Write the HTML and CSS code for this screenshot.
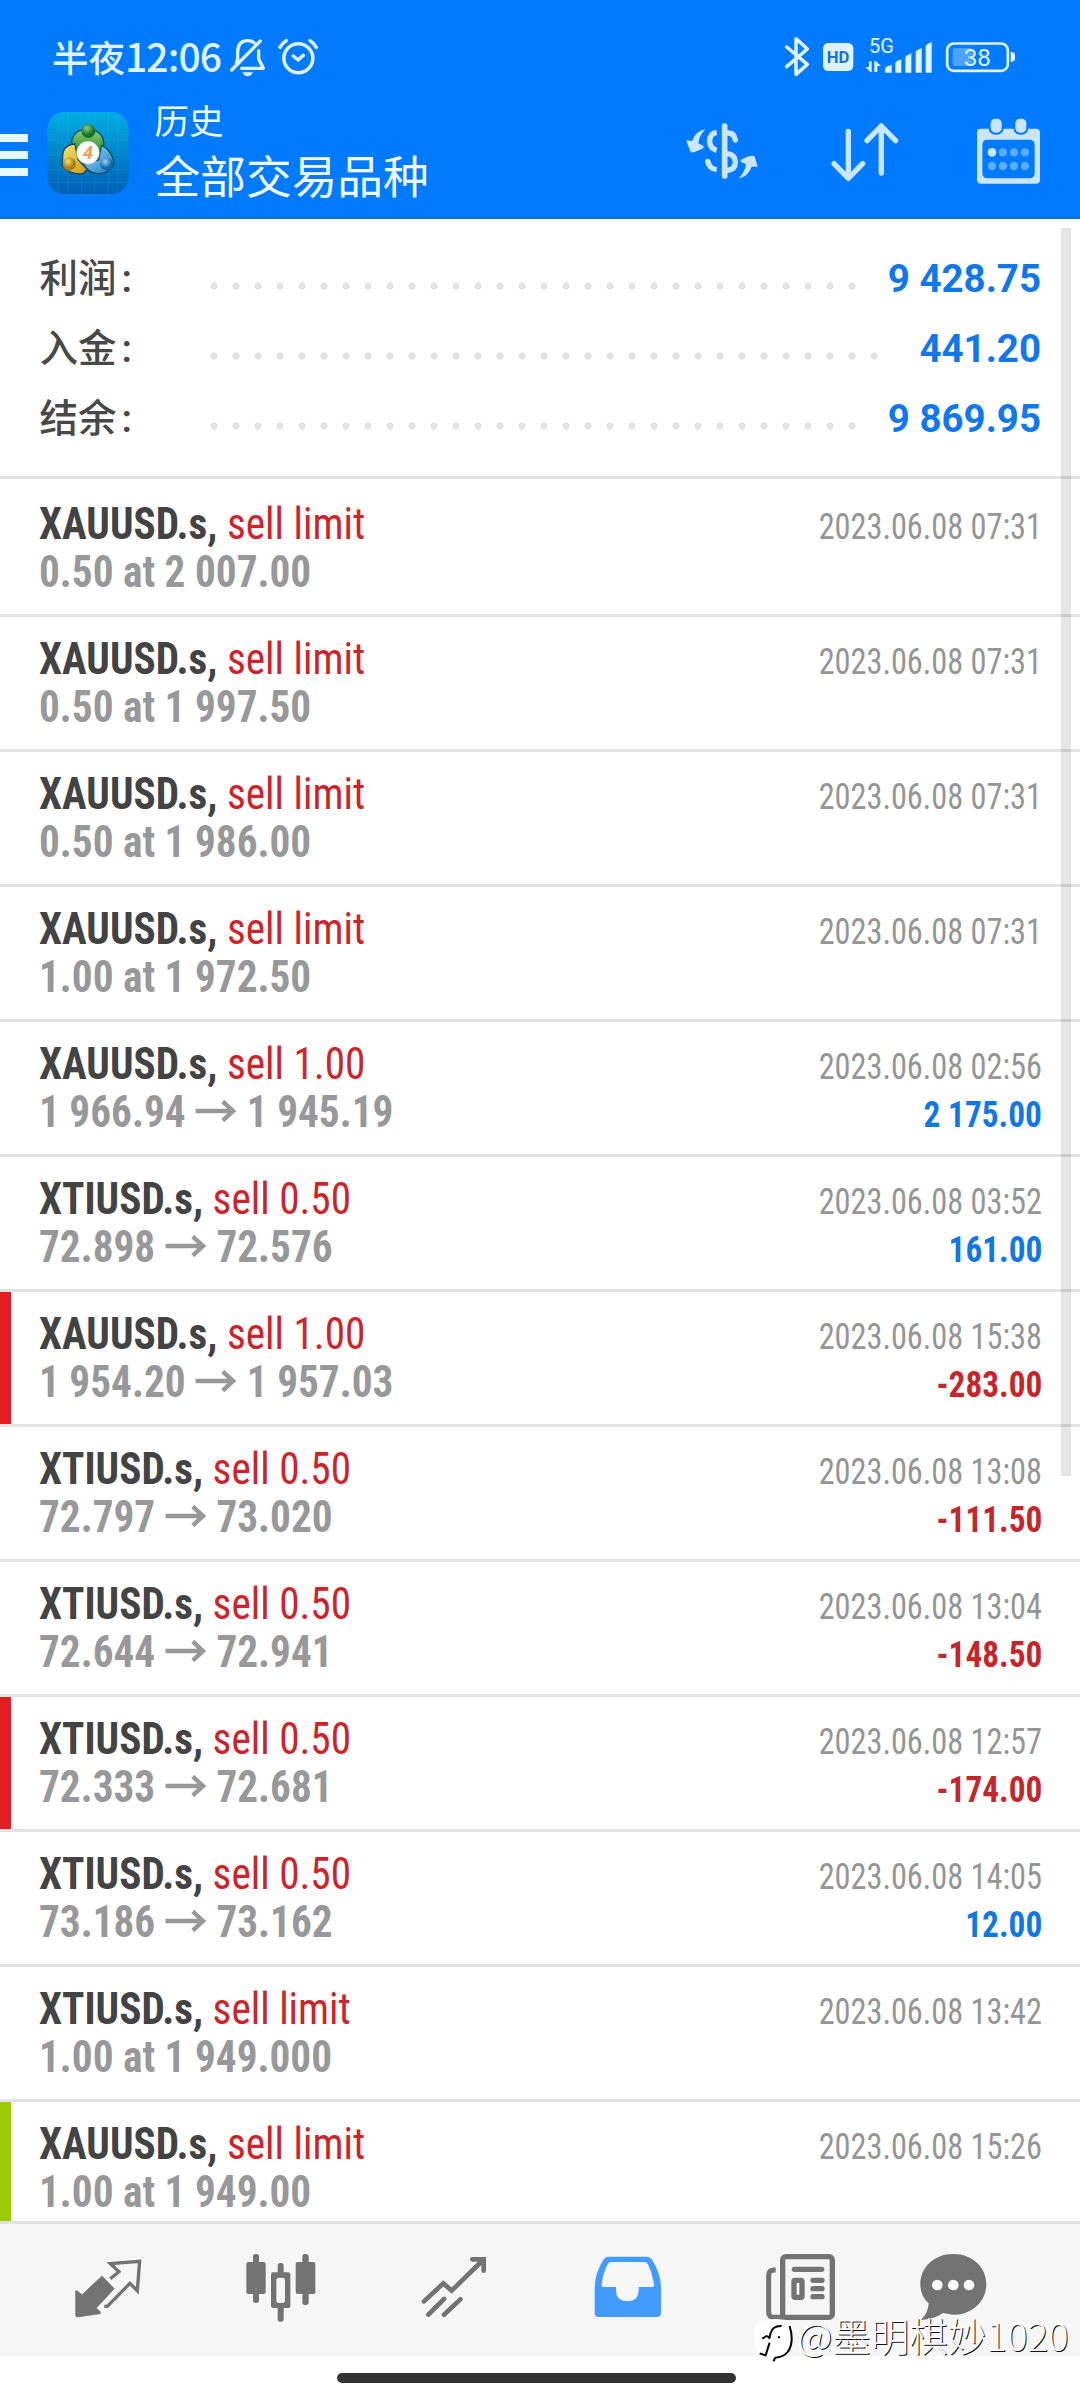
FILE: index.html
```html
<!DOCTYPE html>
<html lang="zh-CN">
<head>
<meta charset="utf-8">
<title>历史</title>
<link rel="stylesheet" href="styles.css">
</head>
<body>
<div class="screen">
  <header class="top">
    <div class="status">
      <span class="clock">半夜<b>12:06</b></span>
      <svg class="s-bell" viewBox="566 36 112 126" fill="none" stroke="#dff3ff" stroke-width="10" stroke-linecap="round" stroke-linejoin="round">
        <path d="M574 138L660 51M588 118L592 104V82Q594 50 622 50Q634 50 641 56M655 80V104L669 133H604"/>
        <path d="M606 145H638Q632 157 622 157T606 145Z" fill="#dff3ff" stroke="none"/>
      </svg>
      <svg class="s-alarm" viewBox="712 36 126 126" fill="none" stroke="#dff3ff" stroke-width="10.5" stroke-linecap="round" stroke-linejoin="round">
        <circle cx="776" cy="103" r="43.5"/>
        <path d="M721 70Q728 57 740 50M811 50Q823 57 830 70M761 96L775 108L791 94"/>
      </svg>
      <div class="status-right">
        <svg class="s-bt" viewBox="372 108 80 122" fill="none" stroke="#dff3ff" stroke-width="10.5" stroke-linejoin="round" stroke-linecap="round">
          <path d="M380 141L442 193L408 223V116L442 147L380 200"/>
        </svg>
        <svg class="s-hd" viewBox="486 108 96 122">
          <rect x="489" y="129" width="91" height="84" rx="16" fill="#dff1ff"/>
          <text x="534" y="189" text-anchor="middle" font-size="50" font-weight="700" fill="#1672cc">HD</text>
        </svg>
        <svg class="s-sig" viewBox="612 108 210 122" fill="#dff3ff">
          <text x="664" y="158" text-anchor="middle" font-size="60">5G</text>
          <path d="M627 184h8v32h-4l-15-15h11zM643 216v-32h5l15 14h-11v18z"/>
          <path d="M675 218v-10q0-6 8-9l12-5v24zM706 218v-28q0-5 6-7l12-5v40zM736 218v-45q0-5 6-7l12-6v58zM767 218v-61q0-5 6-7l12-6v74zM797 218v-79q0-5 6-7l12-6v92z"/>
        </svg>
        <svg class="s-bat" viewBox="855 108 213 122">
          <rect x="878" y="144" width="60" height="54" rx="7" fill="#4ca3ff"/>
          <rect x="861.500" y="130.500" width="182" height="82" rx="20" fill="none" stroke="#dff3ff" stroke-width="8"/>
          <path d="M1052 155q13 2 13 9v13q0 7-13 9z" fill="#dff3ff"/>
          <text x="952" y="198" text-anchor="middle" font-size="73" fill="#dff3ff">38</text>
        </svg>
      </div>
    </div>
    <div class="appbar">
      <div class="menu"><i></i><i></i><i></i></div>
      <svg class="logo" viewBox="132 60 262 258">
        <defs>
          <linearGradient id="bg" x1="0" y1="0" x2="0" y2="1"><stop offset="0" stop-color="#00aee6"/><stop offset=".55" stop-color="#0080c8"/><stop offset="1" stop-color="#005fb4"/></linearGradient>
          <linearGradient id="gr" x1="0" y1="0" x2="0" y2="1"><stop offset="0" stop-color="#93d07a"/><stop offset="1" stop-color="#1f8a2c"/></linearGradient>
          <linearGradient id="ye" x1="0" y1="0" x2="1" y2="1"><stop offset="0" stop-color="#f4e66a"/><stop offset="1" stop-color="#c99a12"/></linearGradient>
          <linearGradient id="bl" x1="0" y1="0" x2="1" y2="1"><stop offset="0" stop-color="#a4dcf8"/><stop offset="1" stop-color="#1878c4"/></linearGradient>
          <radialGradient id="gb" cx=".4" cy=".3"><stop offset="0" stop-color="#8ecb80"/><stop offset="1" stop-color="#17702a"/></radialGradient>
          <radialGradient id="yb" cx=".4" cy=".3"><stop offset="0" stop-color="#f5e070"/><stop offset="1" stop-color="#a97c10"/></radialGradient>
          <radialGradient id="bb" cx=".4" cy=".3"><stop offset="0" stop-color="#9bd6f7"/><stop offset="1" stop-color="#1168ae"/></radialGradient>
        </defs>
        <rect x="142" y="66" width="244" height="246" rx="52" fill="url(#bg)"/>
        <path d="M142 123H386M142 150H386M142 195H386M142 238H386M142 277H386M174 70V308M203 66V312M245 66V312M284 66V312M325 66V312M354 70V308" stroke="#4fc3ee" stroke-width="1.500" opacity=".35"/>
        <g stroke="#124f6c" stroke-width="4">
          <path d="M216 172Q210 130 247 119Q265 112 284 121Q317 134 310 178L297 190L231 178Z" fill="url(#gr)"/>
          <path d="M225 162Q189 164 188 198L187 226Q204 254 248 252L262 238L235 210Z" fill="url(#ye)"/>
          <path d="M305 166Q335 180 342 218Q332 251 296 251Q266 252 250 221L296 210Z" fill="url(#bl)"/>
        </g>
        <circle cx="265" cy="123" r="21" fill="url(#gb)"/>
        <circle cx="208" cy="222" r="20" fill="url(#yb)"/>
        <circle cx="320" cy="222" r="19" fill="url(#bb)"/>
        <circle cx="264" cy="188" r="34" fill="#fffdf8" stroke="#bcc7bb" stroke-width="2"/>
        <text x="264" y="207" text-anchor="middle" font-size="54" font-weight="700" font-style="italic" fill="#f49b56">4</text>
      </svg>
      <div class="titles"><div class="t1">历史</div><div class="t2">全部交易品种</div></div>
      <svg class="i-cur" viewBox="72 340 228 220" fill="none" stroke="#c9e5ff" stroke-width="16" stroke-linecap="round">
        <path d="M194 379V529" stroke-width="17"/>
        <path d="M170 398Q149 402 149 424T170 452M170 510Q148 508 143 484" stroke-linecap="butt"/>
        <path d="M143 486V485M203 400Q223 400 226 421M203 462Q226 466 226 488T203 512"/>
        <path d="M136 389Q108 393 96 424L78 422L92 458Q101 461 130 445L131 439L115 431Q117 408 136 389ZM236 536Q264 531 275 501L293 501L284 470Q275 463 243 480L242 486L258 494Q256 516 236 536Z" fill="#c9e5ff" stroke="none"/>
      </svg>
      <svg class="i-sort" viewBox="505 340 220 220" fill="none" stroke="#c9e5ff" stroke-width="16" stroke-linecap="round" stroke-linejoin="round">
        <path d="M566 395V536M523 492L566 536L609 492M665 520V379M622 423L665 379L708 423"/>
      </svg>
      <svg class="i-cal" viewBox="945 340 200 220">
        <path fill="#c9e5ff" fill-rule="evenodd" d="M963 387H1128Q1140 387 1140 399V540Q1140 552 1128 552H963Q951 552 951 540V399Q951 387 963 387ZM983 420Q967 420 967 436V520Q967 536 983 536H1108Q1124 536 1124 520V436Q1124 420 1108 420Z"/>
        <g fill="#c9e5ff" stroke="#007aff" stroke-width="6"><rect x="989" y="354" width="39" height="48" rx="17"/><rect x="1063" y="354" width="39" height="48" rx="17"/></g>
        <circle cx="996" cy="458" r="13" fill="#c9e5ff"/>
        <g fill="#5cadff"><circle cx="1029" cy="458" r="12.500"/><circle cx="1062" cy="458" r="12.500"/><circle cx="1095" cy="458" r="12.500"/><circle cx="996" cy="499" r="12.500"/><circle cx="1029" cy="499" r="12.500"/><circle cx="1062" cy="499" r="12.500"/><circle cx="1095" cy="499" r="12.500"/></g>
      </svg>
    </div>
  </header>

  <section class="summary">
    <div class="sum"><span class="label">利润<i>:</i></span><span class="dots"></span><span class="value">9 428.75</span></div>
    <div class="sum"><span class="label">入金<i>:</i></span><span class="dots"></span><span class="value">441.20</span></div>
    <div class="sum"><span class="label">结余<i>:</i></span><span class="dots"></span><span class="value">9 869.95</span></div>
  </section>

  <main class="list">
    <div class="row first"><div class="line"><span class="sym">XAUUSD.s, <em>sell limit</em></span><time>2023.06.08 07:31</time></div><div class="line"><span class="price">0.50 at 2 007.00</span></div></div>
    <div class="row"><div class="line"><span class="sym">XAUUSD.s, <em>sell limit</em></span><time>2023.06.08 07:31</time></div><div class="line"><span class="price">0.50 at 1 997.50</span></div></div>
    <div class="row"><div class="line"><span class="sym">XAUUSD.s, <em>sell limit</em></span><time>2023.06.08 07:31</time></div><div class="line"><span class="price">0.50 at 1 986.00</span></div></div>
    <div class="row"><div class="line"><span class="sym">XAUUSD.s, <em>sell limit</em></span><time>2023.06.08 07:31</time></div><div class="line"><span class="price">1.00 at 1 972.50</span></div></div>
    <div class="row"><div class="line"><span class="sym">XAUUSD.s, <em>sell 1.00</em></span><time>2023.06.08 02:56</time></div><div class="line"><span class="price">1 966.94 <svg class="arr" viewBox="0 0 43 22"><path d="M0 11H40M29 1.500L40 11L29 20.500"/></svg> 1 945.19</span><span class="pl">2 175.00</span></div></div>
    <div class="row"><div class="line"><span class="sym">XTIUSD.s, <em>sell 0.50</em></span><time>2023.06.08 03:52</time></div><div class="line"><span class="price">72.898 <svg class="arr" viewBox="0 0 43 22"><path d="M0 11H40M29 1.500L40 11L29 20.500"/></svg> 72.576</span><span class="pl">161.00</span></div></div>
    <div class="row stop"><div class="line"><span class="sym">XAUUSD.s, <em>sell 1.00</em></span><time>2023.06.08 15:38</time></div><div class="line"><span class="price">1 954.20 <svg class="arr" viewBox="0 0 43 22"><path d="M0 11H40M29 1.500L40 11L29 20.500"/></svg> 1 957.03</span><span class="pl loss">-283.00</span></div></div>
    <div class="row"><div class="line"><span class="sym">XTIUSD.s, <em>sell 0.50</em></span><time>2023.06.08 13:08</time></div><div class="line"><span class="price">72.797 <svg class="arr" viewBox="0 0 43 22"><path d="M0 11H40M29 1.500L40 11L29 20.500"/></svg> 73.020</span><span class="pl loss">-111.50</span></div></div>
    <div class="row"><div class="line"><span class="sym">XTIUSD.s, <em>sell 0.50</em></span><time>2023.06.08 13:04</time></div><div class="line"><span class="price">72.644 <svg class="arr" viewBox="0 0 43 22"><path d="M0 11H40M29 1.500L40 11L29 20.500"/></svg> 72.941</span><span class="pl loss">-148.50</span></div></div>
    <div class="row stop"><div class="line"><span class="sym">XTIUSD.s, <em>sell 0.50</em></span><time>2023.06.08 12:57</time></div><div class="line"><span class="price">72.333 <svg class="arr" viewBox="0 0 43 22"><path d="M0 11H40M29 1.500L40 11L29 20.500"/></svg> 72.681</span><span class="pl loss">-174.00</span></div></div>
    <div class="row"><div class="line"><span class="sym">XTIUSD.s, <em>sell 0.50</em></span><time>2023.06.08 14:05</time></div><div class="line"><span class="price">73.186 <svg class="arr" viewBox="0 0 43 22"><path d="M0 11H40M29 1.500L40 11L29 20.500"/></svg> 73.162</span><span class="pl">12.00</span></div></div>
    <div class="row"><div class="line"><span class="sym">XTIUSD.s, <em>sell limit</em></span><time>2023.06.08 13:42</time></div><div class="line"><span class="price">1.00 at 1 949.000</span></div></div>
    <div class="row take"><div class="line"><span class="sym">XAUUSD.s, <em>sell limit</em></span><time>2023.06.08 15:26</time></div><div class="line"><span class="price">1.00 at 1 949.00</span></div></div>
  </main>

  <nav class="tabs">
    <svg class="n1" viewBox="40 30 220 230">
      <path d="M127 108L164 146L110 204L122 215V221L53 231Q48 231 48 226V152L53 153L67 164Z" fill="#737373" stroke="#737373" stroke-width="2" stroke-linejoin="round"/>
      <path d="M152 116L178 95L152 71L240 64L233 152L211 130L143 199H134" fill="none" stroke="#737373" stroke-width="10"/>
    </svg>
    <svg class="n2" viewBox="550 30 230 230" fill="#737373">
      <rect x="580" y="42" width="18" height="147" rx="8"/><rect x="560" y="66" width="58" height="96" rx="6"/>
      <rect x="728" y="42" width="19" height="153" rx="8"/><rect x="708" y="66" width="59" height="96" rx="6"/>
      <rect x="654" y="69" width="18" height="176" rx="8"/><rect x="634" y="97" width="58" height="107" rx="6"/>
      <rect x="650" y="113" width="26" height="76" rx="8" fill="#f6f6f6"/>
    </svg>
    <svg class="n3" viewBox="1075 30 215 230" fill="none" stroke="#737373" stroke-width="14" stroke-linecap="round" stroke-linejoin="miter">
      <path d="M1093 184L1151 130L1176 152L1270 60M1238 58H1272V92M1106 224L1153 177M1153 224L1202 178"/>
    </svg>
    <svg class="n4" viewBox="35 30 215 230">
      <path fill="#429bff" fill-rule="evenodd" d="M83 50H200Q209 50 214 58Q242 100 242 143V219Q242 231 230 231H55Q43 231 43 219V143Q43 100 70 58Q75 50 83 50ZM94 66Q86 66 82 73Q70 95 64 131Q62 141 72 141H107V149Q107 183 141 183T175 149V141H213Q223 141 221 131Q215 98 203 73Q199 66 191 66Z"/>
    </svg>
    <svg class="n5" viewBox="550 30 225 230" fill="none" stroke="#737373">
      <rect x="609" y="50" width="149" height="182" rx="10" stroke-width="16"/>
      <path d="M588 90H584Q567 90 567 107V216Q567 232 583 232H612" stroke-width="15"/>
      <path d="M644 88H726M700 121H727M700 146H727M700 170H727" stroke-width="16" stroke-linecap="round"/>
      <rect x="643" y="121" width="24" height="51" rx="3" stroke-width="16"/>
    </svg>
    <svg class="n6" viewBox="1010 30 220 230">
      <path fill="#737373" d="M1119 42C1178 42 1218 83 1218 133C1218 186 1172 226 1119 224Q1105 223 1088 219Q1062 238 1022 240Q1044 218 1045 190Q1020 168 1020 133C1020 83 1060 42 1119 42Z"/>
      <g fill="#fff"><circle cx="1071" cy="135" r="16"/><circle cx="1119" cy="135" r="16"/><circle cx="1166" cy="135" r="16"/></g>
    </svg>
  </nav>
  <div class="gesture"><i></i></div>

  <div class="scrollbar"></div>
  <div class="watermark">
    <svg viewBox="515 235 130 140"><path d="M527 256Q540 240 560 246Q592 234 624 250Q640 270 638 300Q636 335 606 352Q570 362 540 348Q518 330 524 304Q518 275 527 256Z" fill="#fff"/>
      <path d="M604 262Q578 260 571 283L566 300M571 297L558 292L546 300M568 312L556 350L538 344M628 262Q643 312 622 340Q610 355 584 357M584 357L580 368M593 296h6" fill="none" stroke="#000" stroke-width="6"/></svg>
    <span>@墨明棋妙1020</span>
  </div>
</div>
</body>
</html>
```
FILE: styles.css
```css
* { box-sizing: border-box; }
body { margin: 0; background: #fff; font-family: Roboto, "Noto Sans CJK SC", sans-serif; }
i, em { font-style: normal; }
svg { display: block; flex: none; overflow: visible; }
.screen { position: relative; width: 1080px; height: 2400px; display: flex; flex-direction: column; overflow: hidden; }

.top { flex: none; height: 219px; background: #007aff; border-bottom: 2px solid #1b6dbb; }
.status { height: 90px; padding: 24px 64px 0 52px; display: flex; align-items: flex-start; }
.status svg { margin-top: 12px; }
.clock { width: 176.700px; font: 500 36.500px/63px "Noto Sans CJK SC", sans-serif; color: #dff3ff; white-space: nowrap; }
.clock b { font-weight: 500; font-size: 39px; letter-spacing: -0.900px; }
.s-bell { width: 37.300px; height: 42px; }
.s-alarm { width: 42px; height: 42px; margin-left: 11.300px; }
.status-right { margin-left: auto; display: flex; }
.s-bt { width: 26.700px; height: 40.700px; margin-right: 11.300px; }
.s-hd { width: 32px; height: 40.700px; margin-right: 10px; }
.s-sig { width: 70px; height: 40.700px; margin-right: 11px; }
.s-bat { width: 71px; height: 40.700px; }

.appbar { height: 127px; display: flex; align-items: flex-start; padding-right: 38.300px; }
.menu { width: 44px; padding-top: 44px; display: flex; flex-direction: column; gap: 9px; }
.menu i { width: 27.500px; height: 8px; background: #e4f8ff; }
.logo { width: 87.300px; height: 86px; margin-top: 20px; }
.titles { margin: 2px auto 0 23.300px; color: #f0fbff; font-family: "Noto Sans CJK SC", sans-serif; white-space: nowrap; }
.t1 { font-size: 34.500px; line-height: 55px; }
.t2 { font-size: 45.700px; line-height: 54px; }
.i-cur { width: 76px; height: 73.300px; margin-top: 23.300px; }
.i-sort { width: 73.300px; height: 73.300px; margin: 23.300px 0 0 68.300px; }
.i-cal { width: 66.700px; height: 73.300px; margin: 23.300px 0 0 73.300px; }

.summary { flex: none; height: 260px; padding: 25px 39px 0 39.500px; border-bottom: 3px solid #e3e3e3; }
.sum { height: 70px; display: flex; font-size: 38.500px; line-height: 70px; }
.label { width: 163px; color: #484848; font-family: "Noto Sans CJK SC", sans-serif; font-weight: 500; line-height: 63px; }
.label i { font-family: Roboto, sans-serif; font-weight: 600; margin-left: 5px; }
.dots { flex: 1; margin-right: 32px; background: radial-gradient(circle at center, #e2e2e2 3.200px, transparent 4px) 0 37.500px / 22px 8px repeat-x; }
.value { color: #1078ea; font-weight: 700; }

.list { flex: 1; min-height: 0; overflow: hidden; font-family: "Roboto Condensed", sans-serif; }
.row { height: 135px; padding: 18px 38px 0 39px; border-bottom: 3px solid #e3e3e3; }
.row.first { height: 138px; padding-top: 21px; }
.row.stop { background: linear-gradient(#e21e22, #e21e22) 0 0 / 11px 100% no-repeat padding-box; }
.row.take { background: linear-gradient(#9c0, #9c0) 0 0 / 11px 100% no-repeat padding-box; }
.line { height: 48px; display: flex; justify-content: space-between; align-items: baseline; line-height: 48px; white-space: nowrap; }
/* The list type is set taller and narrower than the condensed face itself */
.sym, .price { font-size: 44px; font-weight: 700; transform: scaleX(.9375); transform-origin: left; }
.sym { color: #434343; }
.sym em { font-weight: 430; color: #cc242a; }
.price { color: #98989a; }
.arr { display: inline-block; width: 43px; height: 22px; margin: 0 1px; vertical-align: 5px; fill: none; stroke: #98989a; stroke-width: 4.500; }
time { font-size: 36px; color: #959595; transform: scaleX(.897); transform-origin: right; }
.pl { font-size: 36px; font-weight: 700; color: #1078e4; transform: scaleX(.925); transform-origin: right; }
.pl.loss { color: #c4262b; }

.tabs { flex: none; height: 135px; padding: 26px 0 0 73.300px; display: flex; background: #f6f6f6; border-top: 3px solid #e0e0e0; }
.tabs svg { height: 76.700px; }
.n1 { width: 73.300px; }
.n2 { width: 76.700px; margin-left: 96.700px; }
.n3 { width: 71.700px; margin-left: 98.300px; }
.n4 { width: 71.700px; margin-left: 101.700px; }
.n5 { width: 75px; margin-left: 100px; }
.n6 { width: 73.300px; margin-left: 78.300px; }
.gesture { flex: none; height: 44px; padding: 17px 0 0 337px; background: #fff; }
.gesture i { display: block; width: 399px; height: 10px; border-radius: 5px; background: #333; }

.scrollbar { position: absolute; left: 1061px; top: 228px; width: 10px; height: 1248px; background: rgba(0, 0, 0, .1); }
.watermark { position: absolute; left: 752px; top: 2317px; display: flex; align-items: flex-start; }
.watermark svg { width: 43.300px; height: 46.700px; }
.watermark span { margin: -1px 0 0 2px; font: 300 38.500px/36px "Noto Sans CJK SC", sans-serif; color: #fff; text-shadow: 1px 1px 0 #111; white-space: nowrap; }
```
